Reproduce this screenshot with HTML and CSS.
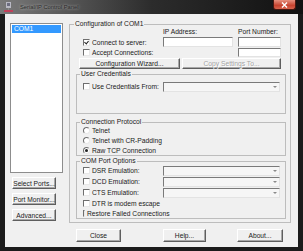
FILE: index.html
```html
<!DOCTYPE html>
<html lang="en">
<head>
    <meta charset="UTF-8">
    <title>Serial/IP Control Panel</title>
    <link rel="stylesheet" href="styles.css">
</head>
<body>

    <div class="window">
        <div class="titlebar">
            <svg class="app-icon" width="9" height="10" viewBox="0 0 9 10">
                <rect x="2" y="0" width="5" height="6" fill="#b9b9c4"/>
                <rect x="3" y="1" width="3" height="3" fill="#6d6d80"/>
                <rect x="4" y="6" width="1" height="2" fill="#8a8a8a"/>
                <rect x="0" y="8" width="9" height="2" fill="#c0405a"/>
            </svg>
            <span class="title">Serial/IP Control Panel</span>
            <span class="close-btn">
                <svg width="7" height="6" viewBox="0 0 7 6">
                    <path d="M1 0.5 L6 5.5 M6 0.5 L1 5.5" stroke="#fff" stroke-width="1.4"/>
                </svg>
            </span>
        </div>

        <div class="client">
            <div class="side">
                <div class="listbox">
                    <div class="list-item selected">COM1</div>
                </div>
                <div class="btn side-btn">Select Ports...</div>
                <div class="btn side-btn">Port Monitor...</div>
                <div class="btn side-btn">Advanced...</div>
            </div>

            <div class="main">
                <fieldset class="group outer">
                    <legend>Configuration of COM1</legend>

                    <div class="server">
                        <span></span>
                        <span class="field-label">IP Address:</span>
                        <span></span>
                        <span class="field-label">Port Number:</span>

                        <label class="check"><span class="box checked"></span>Connect to server:</label>
                        <span class="edit"></span>
                        <span></span>
                        <span class="edit"></span>

                        <label class="check wide"><span class="box"></span>Accept Connections:</label>
                        <span class="edit port2"></span>
                    </div>

                    <div class="wizard-row">
                        <div class="btn wizard">Configuration Wizard...</div>
                        <div class="btn copy disabled">Copy Settings To...</div>
                    </div>

                    <fieldset class="group inner creds">
                        <legend>User Credentials</legend>
                        <div class="opt-row">
                            <label class="check"><span class="box"></span>Use Credentials From:</label>
                            <span class="combo"><span class="arrow"></span></span>
                        </div>
                    </fieldset>

                    <fieldset class="group inner proto">
                        <legend>Connection Protocol</legend>
                        <label class="radio-row"><span class="radio"></span>Telnet</label>
                        <label class="radio-row"><span class="radio"></span>Telnet with CR-Padding</label>
                        <label class="radio-row"><span class="radio on"></span>Raw TCP Connection</label>
                    </fieldset>

                    <fieldset class="group inner ports">
                        <legend>COM Port Options</legend>
                        <div class="opt-row r11">
                            <label class="check"><span class="box"></span>DSR Emulation:</label>
                            <span class="combo"><span class="arrow"></span></span>
                        </div>
                        <div class="opt-row r11">
                            <label class="check"><span class="box"></span>DCD Emulation:</label>
                            <span class="combo"><span class="arrow"></span></span>
                        </div>
                        <div class="opt-row r11">
                            <label class="check"><span class="box"></span>CTS Emulation:</label>
                            <span class="combo"><span class="arrow"></span></span>
                        </div>
                        <div class="opt-row r10">
                            <label class="check"><span class="box"></span>DTR is modem escape</label>
                        </div>
                        <div class="opt-row r10">
                            <label class="check"><span class="box"></span>Restore Failed Connections</label>
                        </div>
                    </fieldset>
                </fieldset>

                <div class="footer">
                    <div class="btn foot-close">Close</div>
                    <div class="btn foot-help">Help...</div>
                    <div class="btn foot-about">About...</div>
                </div>
            </div>
        </div>
    </div>

</body>
</html>
```

FILE: styles.css
```css
body {
    margin: 0;
    background-color: #000;
    font-family: "Liberation Sans", Arial, sans-serif;
    font-size: 6.7px;
    color: #1a1a1a;
}

.window {
    width: 303px;
    height: 251px;
    display: flex;
    flex-direction: column;
    background-color: #1b1b1b;
}

/* title bar */
.titlebar {
    height: 14px;
    display: flex;
    align-items: center;
    background: linear-gradient(90deg, #7a7a7a 0%, #575757 22%, #2c2c2c 50%, #111 100%);
}

.app-icon {
    margin-left: 4px;
    margin-right: 7px;
}

.title {
    font-size: 5.8px;
    color: #2a2a2a;
    text-shadow: 0 0 3px rgba(255, 255, 255, 0.7);
}

.close-btn {
    margin-left: auto;
    margin-right: 7px;
    align-self: flex-start;
    width: 23px;
    height: 10px;
    box-sizing: border-box;
    display: flex;
    align-items: center;
    justify-content: center;
    border: 1px solid #4a1810;
    border-top: none;
    border-radius: 0 0 3px 3px;
    background: linear-gradient(#e6917f, #c7432f 60%, #d7644e);
}

/* client area */
.client {
    flex: 1;
    margin: 0 5px 4px 5px;
    padding: 9px 7px 0 5px;
    background-color: #f0f0f0;
    display: flex;
}

.side {
    width: 53px;
    display: flex;
    flex-direction: column;
}

.listbox {
    height: 150px;
    box-sizing: border-box;
    border: 1px solid #8d8d8d;
    background-color: #fff;
    padding: 1px;
}

.list-item {
    height: 8px;
    line-height: 8px;
    padding-left: 2px;
}

.list-item.selected {
    background-color: #3399ff;
    color: #fff;
}

/* classic buttons */
.btn {
    box-sizing: border-box;
    display: flex;
    align-items: center;
    justify-content: center;
    white-space: nowrap;
    background-color: #f0f0f0;
    border: 1px solid;
    border-color: #fff #5e5e5e #5e5e5e #fff;
    box-shadow: inset -1px -1px 0 #a8a8a8;
}

.btn.disabled {
    color: #a3a3a3;
    text-shadow: 1px 1px 0 #fff;
}

.side-btn {
    width: 44px;
    height: 12px;
    margin-left: 2px;
    margin-top: 4px;
}

.side-btn:first-of-type {
    margin-top: 7px;
}

.main {
    flex: 1;
    margin-left: 6px;
    display: flex;
    flex-direction: column;
}

/* group boxes */
.group {
    margin: 0;
    border: 1px solid #bdbdbd;
    min-width: 0;
}

.group legend {
    padding: 0 1px;
    line-height: 8px;
}

.outer {
    margin-top: -3px;
    padding: 0 3px 3px 4px;
}

.inner {
    margin: 0 1px 0 2px;
    padding: 0 0 0 3px;
}

.server {
    display: grid;
    grid-template-columns: 89px 70px 5px 43px;
    grid-template-rows: 8px 10px 9px;
    row-gap: 1px;
}

.field-label {
    line-height: 8px;
    white-space: nowrap;
}

.edit {
    box-sizing: border-box;
    background-color: #fff;
    border: 1px solid;
    border-color: #7a7a7a #e3e3e3 #e3e3e3 #7a7a7a;
}

.port2 {
    grid-column: 4;
}

.check {
    display: flex;
    align-items: center;
    white-space: nowrap;
}

.server .check {
    padding-left: 9px;
}

.check.wide {
    grid-column: 1 / 4;
}

.box {
    width: 7px;
    height: 7px;
    box-sizing: border-box;
    margin-right: 2px;
    background-color: #fff;
    border: 1px solid;
    border-color: #6e6e6e #e8e8e8 #e8e8e8 #6e6e6e;
    position: relative;
}

.box.checked::after {
    content: "";
    position: absolute;
    left: 1px;
    top: 0;
    width: 2px;
    height: 3px;
    border: solid #222;
    border-width: 0 1px 1px 0;
    transform: rotate(40deg);
}

.wizard-row {
    display: flex;
    margin-top: 1px;
    padding-left: 5px;
    height: 11px;
}

.wizard {
    width: 101px;
}

.copy {
    width: 99px;
    margin-left: 2px;
}

.creds {
    margin-top: 1px;
    padding-bottom: 21px;
}

.opt-row {
    display: grid;
    grid-template-columns: 83px 117px;
    align-items: center;
}

.opt-row .check {
    padding-left: 3px;
}

.creds .opt-row {
    margin-top: 3px;
    height: 11px;
}

.opt-row.r11 {
    height: 11px;
}

.opt-row.r10 {
    height: 10px;
}

.combo {
    height: 10px;
    box-sizing: border-box;
    background-color: #f6f6f6;
    border: 1px solid;
    border-color: #7a7a7a #e3e3e3 #e3e3e3 #7a7a7a;
    display: flex;
    align-items: center;
    justify-content: flex-end;
}

.arrow {
    width: 0;
    height: 0;
    margin-right: 2px;
    border-left: 2px solid transparent;
    border-right: 2px solid transparent;
    border-top: 2px solid #8a8a8a;
}

.proto {
    margin-top: 4px;
    padding-bottom: 0;
}

.radio-row {
    height: 10px;
    display: flex;
    align-items: center;
    padding-left: 3px;
    white-space: nowrap;
}

.radio-row:first-of-type {
    margin-top: -1px;
}

.radio {
    width: 7px;
    height: 7px;
    box-sizing: border-box;
    margin-right: 2px;
    border-radius: 50%;
    background-color: #fff;
    border: 1px solid;
    border-color: #6e6e6e #e8e8e8 #e8e8e8 #6e6e6e;
    display: flex;
    align-items: center;
    justify-content: center;
}

.radio.on::after {
    content: "";
    width: 3px;
    height: 3px;
    border-radius: 50%;
    background-color: #222;
}

.ports {
    margin-top: 1px;
}

.footer {
    display: flex;
    margin-top: 6px;
    height: 13px;
}

.foot-close {
    width: 45px;
    margin-left: 7px;
}

.foot-help {
    width: 43px;
    margin-left: 42px;
}

.foot-about {
    width: 46px;
    margin-left: 31px;
}
```
